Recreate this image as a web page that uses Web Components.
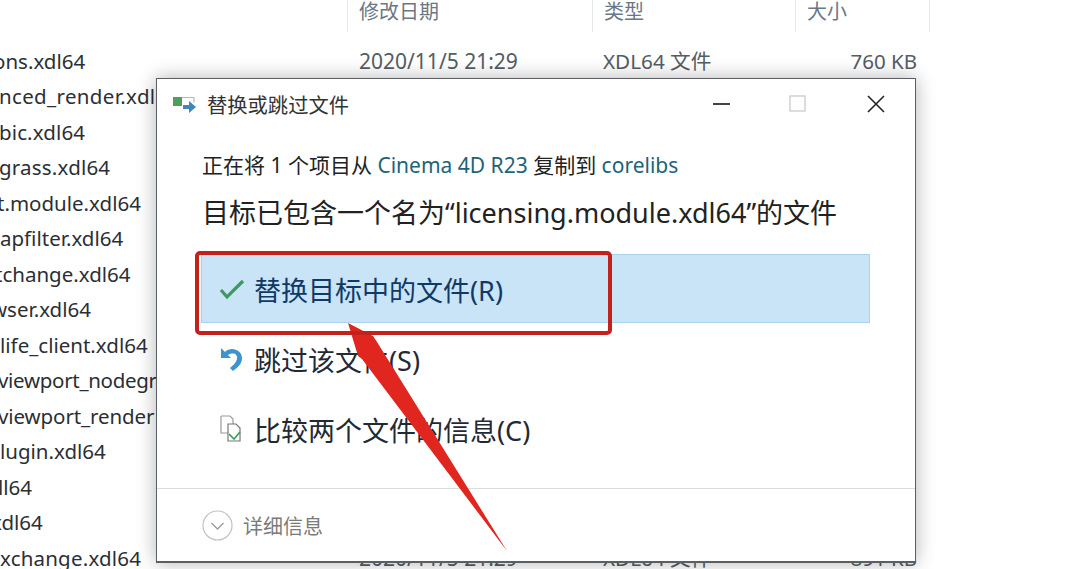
<!DOCTYPE html>
<html><head><meta charset="utf-8"><style>
html,body{margin:0;width:1080px;height:569px;overflow:hidden;background:#fff;}
body{font-family:"Noto Sans","Noto Sans CJK SC",sans-serif;position:relative}
</style></head><body>
<file-explorer>
<col-head slot="head"></col-head>
<file-row name="ons.xdl64" shift="-7" date="2020/11/5 21:29" type="XDL64 文件" size="760 KB"></file-row>
<file-row name="nced_render.xdl" ls=".35" shift="-1"></file-row>
<file-row name="bic.xdl64" ls=".12" shift="-1"></file-row>
<file-row name="grass.xdl64" ls=".2" shift="-1"></file-row>
<file-row name="t.module.xdl64" shift="-3"></file-row>
<file-row name="apfilter.xdl64"></file-row>
<file-row name="tchange.xdl64" shift="-5"></file-row>
<file-row name="wser.xdl64" shift="-9"></file-row>
<file-row name="life_client.xdl64"></file-row>
<file-row name="viewport_nodegr" ls="-.3" shift="-2"></file-row>
<file-row name="viewport_render" ls="-.1" shift="-2"></file-row>
<file-row name="lugin.xdl64"></file-row>
<file-row name="ll64" shift="-2"></file-row>
<file-row name="xdl64" shift="-9"></file-row>
<file-row name="xchange.xdl64" ls=".2" date="2020/11/5 21:29" type="XDL64 文件" size="891 KB"></file-row>
</file-explorer>
<replace-dialog></replace-dialog>
<red-arrow></red-arrow>
<script>
function def(n,html,init){customElements.define(n,class extends HTMLElement{connectedCallback(){if(this.shadowRoot)return;const r=this.attachShadow({mode:'open'});r.innerHTML=html;init&&init(this,r);}});}
def('file-explorer',`<style>:host{display:block;width:1080px;height:569px;overflow:hidden}
.rows{display:flex;flex-direction:column;padding-top:11.5px}</style><slot name="head"></slot><div class="rows"><slot></slot></div>`);
def('col-head',`<style>:host{display:flex;height:32px;box-sizing:border-box;padding-top:1px;color:#6b7785;font-size:20px;line-height:22px;padding-left:347px}
div{border-left:1px solid #e4e7ea;padding-left:11px;box-sizing:border-box;margin-top:-1px;padding-top:1px}</style>
<div style="width:245px">修改日期</div><div style="width:203px">类型</div><div style="width:135px;border-right:1px solid #e4e7ea">大小</div>`);
def('file-row',`<style>:host{display:flex;height:35.5px;line-height:35.5px;font-size:20.5px;color:#2b2f33;white-space:nowrap}
.n{width:359px;overflow:hidden}.d{width:244px;color:#555c63;font-size:21px}.t{width:190px;color:#555c63;font-size:20.7px}.s{width:124px;text-align:right;color:#555c63;font-size:20.5px}</style>
<div class="n"></div><div class="d"></div><div class="t"></div><div class="s"></div>`,(h,r)=>{for(const[k,c]of[['name','n'],['date','d'],['type','t'],['size','s']])r.querySelector('.'+c).textContent=h.getAttribute(k)||'';
const n=r.querySelector('.n');n.style.textIndent=(h.getAttribute('shift')||0)+'px';if(h.getAttribute('ls'))n.style.letterSpacing=h.getAttribute('ls')+'px';});
def('dialog-option',`<style>:host{display:flex;align-items:center;box-sizing:border-box;height:70px;padding:0 0 0 16px;gap:7px;font-size:27px;color:#1f2a35}
:host([active]){height:69px;margin-bottom:1px;padding-top:1px;background:#c9e3f7;border:1px solid #a9d2ef;color:#0f3a66;padding-left:15px}
.i{width:30px;height:30px;display:flex;align-items:center;justify-content:center}</style><span class="i"><slot name="icon"></slot></span><slot></slot>`);
def('replace-dialog',`<style>:host{position:absolute;left:156px;top:78px;width:760px;height:485px;box-sizing:border-box;background:#fff;border:1px solid #5a5f63;border-bottom-width:2px;box-shadow:0 0 18px rgba(0,0,0,.3);display:flex;flex-direction:column;color:#222}
.title{display:flex;align-items:center;height:52px;box-sizing:border-box;padding:0 0 2px 15px;gap:9px;font-size:20.3px;color:#333;flex:none}
.ctl{margin-left:auto;display:flex;align-items:center;gap:0}
.ctl svg{display:block}
.body{flex:1;display:flex;flex-direction:column;padding:21px 45px 0 45px}
.from{font-size:21px;line-height:26px;color:#222;margin-bottom:17px;white-space:nowrap}
.from b{font-weight:400;color:#1e6478}
.target{font-size:27px;line-height:36px;color:#222;margin-bottom:23px;white-space:nowrap}
.opts{display:flex;flex-direction:column;margin-left:-1px}
.foot{flex:none;height:73px;box-sizing:border-box;border-top:1px solid #dcdcdc;display:flex;align-items:center;padding-left:45px;gap:10px;font-size:20px;color:#7a7a7a}
</style>
<div class="title"><svg width="26" height="20" viewBox="0 0 26 20"><rect x="1" y="3" width="9" height="9" fill="#4e9e5c"/><path d="M10 3.5h12v5" fill="none" stroke="#b9b9b9" stroke-width="1.2"/><path d="M11 11h6V7l7 6-7 6v-4h-6z" fill="#3f86bb"/></svg><span>替换或跳过文件</span>
<div class="ctl"><svg width="17" height="3" style="margin-right:59px"><rect width="17" height="2" fill="#444"/></svg><svg width="18" height="18" viewBox="0 0 18 18" style="margin-right:59px"><rect x="1" y="1" width="15" height="15" fill="none" stroke="#c6c6c6" stroke-width="1.2"/></svg><svg width="20" height="20" viewBox="0 0 20 20" style="margin-right:29px"><path d="M2 2l16 16M18 2L2 18" stroke="#222" stroke-width="1.6" fill="none"/></svg></div></div>
<div class="body">
<div class="from">正在将 1 个项目从 <b>Cinema 4D R23</b> 复制到 <b>corelibs</b></div>
<div class="target">目标已包含一个名为“licensing.module.xdl64”的文件</div>
<div class="opts">
<dialog-option active><svg slot="icon" width="28" height="24" viewBox="0 0 28 24"><path d="M3 13l6 7L25 4" fill="none" stroke="#3c9a5f" stroke-width="3.2"/></svg>替换目标中的文件(R)</dialog-option>
<dialog-option><svg slot="icon" width="26" height="28" viewBox="0 0 26 28"><path d="M2 3v10h10l-3-3c5-3 10-1 9 4-1 4-4 6-7 9l3 3c5-4 9-7 9-13C23 5 12 1 6 7z" fill="#3d93cf"/></svg>跳过该文件(S)</dialog-option>
<dialog-option><svg slot="icon" width="28" height="30" viewBox="0 0 28 30"><path d="M3 2h9l3 3v7M3 2v17h7" fill="none" stroke="#9a9a9a" stroke-width="1.2"/><path d="M10 10h8l4 4v13H10z" fill="#fff" stroke="#777" stroke-width="1.2"/><path d="M11 20l5 5 6-7" fill="none" stroke="#3c9a5f" stroke-width="1.6"/></svg>比较两个文件的信息(C)</dialog-option>
</div></div>
<div class="foot"><svg width="31" height="31" viewBox="0 0 31 31"><circle cx="15.5" cy="15.5" r="14.5" fill="#fff" stroke="#c2c2c2" stroke-width="1.2"/><path d="M9.5 13l6 6 6-6" fill="none" stroke="#9a9a9a" stroke-width="1.3"/></svg><span>详细信息</span></div>`);
def('red-arrow',`<style>:host{position:absolute;left:0;top:0;width:1080px;height:569px;pointer-events:none;display:block}
svg{display:block}.box{position:absolute;left:195px;top:251px;width:417px;height:84px;box-sizing:border-box;border:4px solid #c4211d;border-radius:5px}</style>
<div class="box"></div><svg width="1080" height="569"><path d="M348 323L373 336 377 342 507 551 362 359 358 356Z" fill="#e0261e"/></svg>`);
</script></body></html>
